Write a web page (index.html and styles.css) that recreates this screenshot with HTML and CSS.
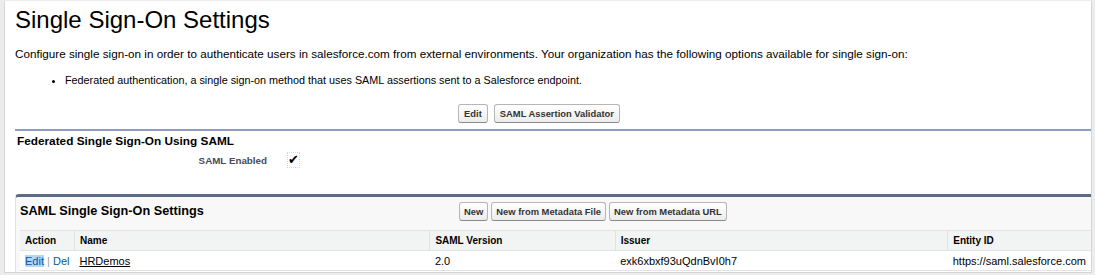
FILE: index.html
```html
<!DOCTYPE html>
<html lang="en">
<head>
    <meta charset="UTF-8">
    <title>Single Sign-On Settings</title>
    <link rel="stylesheet" href="styles.css">
</head>
<body>
    <div class="page">
        <h1>Single Sign-On Settings</h1>

        <p class="intro">Configure single sign-on in order to authenticate users in salesforce.com from external environments. Your organization has the following options available for single sign-on:</p>

        <ul class="options">
            <li>Federated authentication, a single sign-on method that uses SAML assertions sent to a Salesforce endpoint.</li>
        </ul>

        <div class="button-row">
            <button class="btn">Edit</button>
            <button class="btn">SAML Assertion Validator</button>
        </div>

        <!-- Federated section -->
        <div class="section">
            <h3>Federated Single Sign-On Using SAML</h3>
            <div class="field">
                <span class="field-label">SAML Enabled</span>
                <span class="check">&#10004;</span>
            </div>
        </div>

        <!-- Related list -->
        <div class="related">
            <div class="related-head">
                <h3>SAML Single Sign-On Settings</h3>
                <div class="related-buttons">
                    <button class="btn">New</button>
                    <button class="btn">New from Metadata File</button>
                    <button class="btn">New from Metadata URL</button>
                </div>
            </div>

            <table class="list">
                <colgroup>
                    <col class="col-action">
                    <col class="col-name">
                    <col class="col-version">
                    <col class="col-issuer">
                    <col>
                </colgroup>
                <thead>
                    <tr>
                        <th>Action</th>
                        <th>Name</th>
                        <th>SAML Version</th>
                        <th>Issuer</th>
                        <th>Entity ID</th>
                    </tr>
                </thead>
                <tbody>
                    <tr>
                        <td><a href="#" class="action selected">Edit</a> <span class="pipe">|</span> <a href="#" class="action">Del</a></td>
                        <td><a href="#" class="name-link">HRDemos</a></td>
                        <td>2.0</td>
                        <td>exk6xbxf93uQdnBvI0h7</td>
                        <td>https://saml.salesforce.com</td>
                    </tr>
                    <tr class="empty">
                        <td></td><td></td><td></td><td></td><td></td>
                    </tr>
                </tbody>
            </table>
        </div>
    </div>
</body>
</html>
```

FILE: styles.css
```css
/* Global */
* {
    box-sizing: border-box;
    margin: 0;
    padding: 0;
}

body {
    font-family: "Liberation Sans", Arial, sans-serif;
    background: #ececec;
    color: #000;
    height: 275px;
    overflow: hidden;
}

.page {
    margin: 1px 3px 0 4px;
    height: 272px;
    background: #fff;
    border-left: 1px solid #d6d6d6;
    border-right: 1px solid #d6d6d6;
    border-bottom: 1px solid #d6d6d6;
    padding: 5px 0 0 10px;
    overflow: hidden;
}

h1 {
    font-size: 24px;
    font-weight: normal;
    line-height: 27px;
    margin-bottom: 13px;
}

.intro {
    font-size: 11.7px;
    line-height: 16px;
}

.options {
    margin: 10px 0 0 50px;
    font-size: 10.8px;
    line-height: 16px;
}

/* Buttons */
.button-row {
    display: flex;
    justify-content: center;
    gap: 6px;
    padding: 16px 28px 6px 0;
}

.btn {
    font-family: "Liberation Sans", Arial, sans-serif;
    font-size: 9.4px;
    font-weight: bold;
    color: #333;
    background: linear-gradient(#ffffff, #ececec);
    border: 1px solid #b5b5b5;
    border-bottom-color: #8a8a8a;
    border-radius: 3px;
    padding: 3px 5px;
    line-height: 11px;
}

/* Federated section */
.section {
    border-top: 2px solid #8e9dbe;
    padding: 4px 0 0 2px;
    height: 65px;
}

.section h3 {
    font-size: 11.8px;
    line-height: 13px;
}

.field {
    display: flex;
    align-items: center;
    margin-top: 5px;
}

.field-label {
    width: 250px;
    text-align: right;
    font-size: 9.8px;
    font-weight: bold;
    color: #4a4a56;
}

.check {
    margin-left: 21px;
    font-size: 13px;
    line-height: 14px;
    outline: 1px dotted #d6d6d6;
}

/* Related list */
.related {
    background: #f8f8f8;
    border-top: 3px solid #5c6a85;
    border-left: 1px solid #e0e3e5;
    border-top-left-radius: 4px;
    padding: 0 0 0 4px;
}

.related-head {
    display: flex;
    align-items: center;
    height: 28px;
}

.related-head h3 {
    font-size: 12.7px;
    width: 439px;
}

.related-buttons {
    display: flex;
    gap: 3px;
}

.related-buttons .btn {
    padding: 3px 4px;
}

.list {
    border-collapse: collapse;
    width: 100%;
    margin-top: 5px;
    font-size: 11px;
}

.col-action { width: 51px; }
.col-name { width: 359px; }
.col-version { width: 187px; }
.col-issuer { width: 335px; }

.list th {
    background: #f2f3f3;
    text-align: left;
    font-size: 10px;
    font-weight: bold;
    color: #000;
    height: 20px;
    padding: 0 5px;
    border-top: 1px solid #e0e3e5;
    border-bottom: 1px solid #e0e3e5;
    border-left: 1px solid #e0e3e5;
}

.list th:first-child {
    border-left: none;
}

.list td {
    background: #fff;
    height: 20px;
    padding: 0 5px;
    border-bottom: 1px solid #e3e3e3;
    white-space: nowrap;
}

.action {
    color: #015ba7;
    text-decoration: none;
}

.action.selected {
    background: #b7d4f2;
}

.pipe {
    color: #9aa3ad;
}

.name-link {
    color: #000;
}
```
